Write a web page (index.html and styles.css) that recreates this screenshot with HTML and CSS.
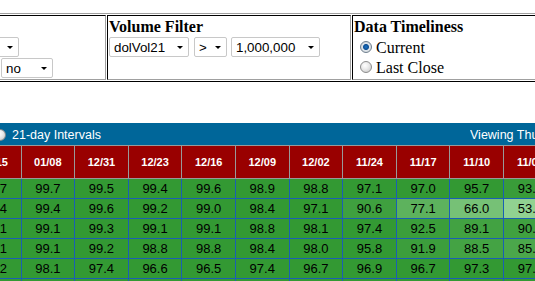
FILE: index.html
```html
<!DOCTYPE html>
<html lang="en">
<head>
    <meta charset="UTF-8">
    <meta name="viewport" content="width=device-width, initial-scale=1.0">
    <title>Market Breadth</title>
    <link rel="stylesheet" href="styles.css">
</head>
<body>
    <div class="viewport">
        <div class="filters">
            <div class="box box-misc">
                <h3>Other</h3>
                <div class="line">
                    <span class="lbl lbl-sector">Sector:</span>
                    <span class="sel sel-sector"><select><option>All</option></select></span>
                </div>
                <div class="line">
                    <span class="lbl lbl-etf">ETFs:</span>
                    <span class="sel sel-no"><select><option>no</option><option>yes</option></select></span>
                </div>
            </div>
            <div class="box box-volume">
                <h3>Volume Filter</h3>
                <div class="line">
                    <span class="sel sel-field"><select><option>dolVol21</option><option>dolVol63</option></select></span>
                    <span class="sel sel-op"><select><option>&gt;</option><option>&lt;</option></select></span>
                    <span class="sel sel-amount"><select><option>1,000,000</option><option>5,000,000</option></select></span>
                </div>
            </div>
            <div class="box box-time">
                <h3>Data Timeliness</h3>
                <label class="opt"><input type="radio" name="timeliness" checked>Current</label>
                <label class="opt"><input type="radio" name="timeliness">Last Close</label>
            </div>
        </div>

        <div class="grid">
            <div class="bar">
                <div class="bar-opts">
                    <label class="bar-opt bar-opt-first"><input type="radio" name="interval" checked>Weekly</label>
                    <label class="bar-opt"><input type="radio" name="interval">21-day Intervals</label>
                </div>
                <span class="bar-note">Viewing Thursday 01/15 data</span>
            </div>
            <table class="data">
                <tr>
                    <th>Sym</th><th>01/15</th><th>01/08</th><th>12/31</th><th>12/23</th><th>12/16</th>
                    <th>12/09</th><th>12/02</th><th>11/24</th><th>11/17</th><th>11/10</th><th>11/03</th>
                </tr>
                <tr>
                    <td>SPX</td><td>99.7</td><td>99.7</td><td>99.5</td><td>99.4</td><td>99.6</td>
                    <td>98.9</td><td>98.8</td><td>97.1</td><td>97.0</td><td>95.7</td>
                    <td style="background:#399c39">93.4</td>
                </tr>
                <tr>
                    <td>NDX</td><td>99.4</td><td>99.4</td><td>99.6</td><td>99.2</td><td>99.0</td>
                    <td>98.4</td><td>97.1</td>
                    <td style="background:#3fa03f">90.6</td>
                    <td style="background:#5db25d">77.1</td>
                    <td style="background:#76c176">66.0</td>
                    <td style="background:#91d291">53.6</td>
                </tr>
                <tr>
                    <td>RUT</td><td>99.1</td><td>99.1</td><td>99.3</td><td>99.1</td><td>99.1</td>
                    <td>98.8</td><td>98.1</td><td>97.4</td>
                    <td style="background:#3b9e3b">92.5</td>
                    <td style="background:#42a242">89.1</td>
                    <td style="background:#40a140">90.1</td>
                </tr>
                <tr>
                    <td>DJI</td><td>99.1</td><td>99.1</td><td>99.2</td><td>98.8</td><td>98.8</td>
                    <td>98.4</td><td>98.0</td><td>95.8</td>
                    <td style="background:#3c9e3c">91.9</td>
                    <td style="background:#44a344">88.5</td>
                    <td style="background:#4ba74b">85.2</td>
                </tr>
                <tr>
                    <td>MID</td><td>98.2</td><td>98.1</td><td>97.4</td><td>96.6</td><td>96.5</td>
                    <td>97.4</td><td>96.7</td><td>96.9</td><td>96.7</td><td>97.3</td><td>97.4</td>
                </tr>
                <tr>
                    <td>OEX</td><td>99.0</td><td>98.9</td><td>99.0</td><td>98.7</td><td>98.6</td>
                    <td>98.2</td><td>97.9</td><td>97.0</td><td>96.8</td><td>96.4</td><td>96.1</td>
                </tr>
            </table>
        </div>
    </div>
</body>
</html>
```

FILE: styles.css
```css
* {
    margin: 0;
    padding: 0;
    box-sizing: border-box;
}

body {
    font-family: 'Liberation Serif', 'Times New Roman', serif;
    background-color: #fff;
    color: #000;
}

.viewport {
    width: 535px;
    height: 281px;
    overflow: hidden;
}

/* filter strip (old border=1 table look) */
.filters {
    display: flex;
    gap: 1px;
    padding: 1px;
    width: 900px;
    margin: 13px 0 0 -150px;
    border: 1px solid;
    border-color: #a0a0a0 #000 #000 #a0a0a0;
}

.box {
    height: 65px;
    padding: 1px;
    border: 1px solid;
    border-color: #000 #a0a0a0 #a0a0a0 #000;
}

.box-misc { width: 254px; }
.box-volume { width: 244px; }
.box-time { width: 300px; }

.box h3 {
    font-size: 16px;
    font-weight: bold;
    line-height: 19px;
    white-space: nowrap;
}

.line {
    display: flex;
    margin-top: 1px;
}

.lbl {
    display: inline-block;
    font-size: 14px;
    line-height: 20px;
}

.lbl-sector { width: 101px; }
.lbl-etf { width: 147px; }

.sel {
    position: relative;
    display: inline-block;
    height: 20px;
}

.sel select {
    appearance: none;
    -webkit-appearance: none;
    width: 100%;
    height: 20px;
    padding: 0 14px 0 4px;
    border: 1px solid #c8c8c8;
    border-radius: 2px;
    background-color: #fff;
    color: #000;
    font-family: 'Liberation Sans', Arial, sans-serif;
    font-size: 13.33px;
    outline: none;
}

.sel::after {
    content: "";
    position: absolute;
    right: 6px;
    top: 9px;
    border-left: 3px solid transparent;
    border-right: 3px solid transparent;
    border-top: 3px solid #000;
    pointer-events: none;
}

.sel-sector { width: 64px; }
.sel-no { width: 52px; }
.sel-field { width: 80px; margin-right: 5px; }
.sel-op { width: 33px; margin-right: 4px; }
.sel-amount { width: 89px; }

.opt {
    display: block;
    font-size: 16px;
    line-height: 20px;
    white-space: nowrap;
}

.opt:first-of-type {
    margin-top: 1.5px;
}

input[type="radio"] {
    appearance: none;
    -webkit-appearance: none;
    display: inline-block;
    width: 12px;
    height: 12px;
    border-radius: 50%;
    border: 1px solid #8c8c8c;
    background: radial-gradient(circle at 40% 35%, #fff 0, #ececec 40%, #c4c4c4 100%);
    vertical-align: baseline;
}

input[type="radio"]:checked {
    border-color: #6f7f8f;
    background: radial-gradient(circle, #1d74c8 0, #0d4f93 2.5px, #dfe6ec 3.5px, #c9c9c9 100%);
}

.opt input {
    margin: 0 4px 0 6px;
}

/* breadth grid */
.grid {
    width: 644.4px;
    margin: 41px 0 0 -86.7px;
}

.bar {
    display: grid;
    grid-template-columns: 556.7px auto;
    align-items: center;
    height: 22px;
    padding-top: 2px;
    background-color: #006699;
    color: #fff;
    font-family: 'Liberation Sans', Arial, sans-serif;
    font-size: 12.5px;
    white-space: nowrap;
}

.bar-opts {
    display: flex;
    align-items: center;
}

.bar-opt {
    display: flex;
    align-items: center;
}

.bar-opt-first {
    width: 80.7px;
    padding-left: 4px;
}

.bar-opt input {
    margin-right: 6px;
    vertical-align: middle;
}

.bar-note {
    overflow: hidden;
}

.data {
    width: 644.4px;
    table-layout: fixed;
    border-collapse: collapse;
    font-family: 'Liberation Sans', Arial, sans-serif;
}

.data th {
    height: 33px;
    background-color: #990000;
    color: #fff;
    font-size: 11px;
    font-weight: bold;
    text-align: center;
    border: 1px solid #999;
}

.data td {
    height: 20px;
    background-color: #339933;
    color: #000;
    font-size: 13px;
    text-align: center;
    border: 1px solid #1a5fb4;
}
```
